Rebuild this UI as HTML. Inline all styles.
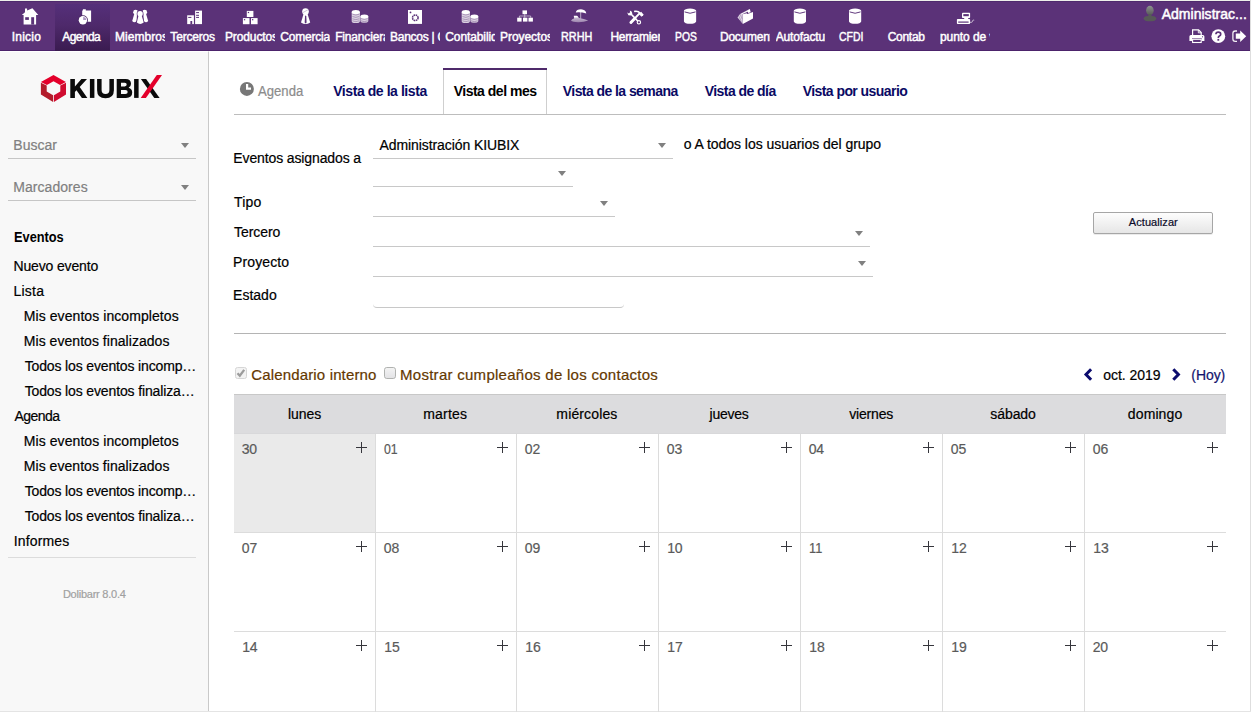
<!DOCTYPE html>
<html><head><meta charset="utf-8"><title>Agenda</title>
<style>
html,body{margin:0;padding:0;background:#fff;}
body{width:1251px;height:712px;overflow:hidden;position:relative;font-family:"Liberation Sans",sans-serif;}
.b{position:absolute;}
.t{position:absolute;white-space:nowrap;display:block;}
svg{position:absolute;left:0;top:0;}
</style></head><body>
<div class="b" style="left:0px;top:0px;width:1251px;height:712px;background:#fff;"></div>
<div class="b" style="left:0px;top:0px;width:1251px;height:1px;background:#eef0ea;"></div>
<div class="b" style="left:0px;top:1px;width:1250px;height:50px;background:#5b3278;border-top:1px solid #4f2a6d;border-bottom:1px solid #4c236b;box-sizing:border-box;"></div>
<div class="b" style="left:55px;top:4px;width:55px;height:47px;background:linear-gradient(#55307a 0%,#4e296b 45%,#3a1b50 100%);"></div>
<div class="b" style="left:0px;top:52px;width:208px;height:660px;background:#f8f8f8;"></div>
<div class="b" style="left:208px;top:52px;width:1px;height:660px;background:#c9c9c9;"></div>
<div class="b" style="left:208px;top:51px;width:1px;height:1px;background:#e4e4e4;"></div>
<div class="b" style="left:8px;top:158px;width:188px;height:1px;background:#c6c6c6;"></div>
<div class="b" style="left:8px;top:200px;width:188px;height:1px;background:#c6c6c6;"></div>
<div class="b" style="left:8px;top:557px;width:188px;height:1px;background:#dcdcdc;"></div>
<div class="b" style="left:1250px;top:0px;width:1px;height:712px;background:#dedede;"></div>
<div class="b" style="left:0px;top:711px;width:1251px;height:1px;background:#e4e4e4;"></div>
<div class="b" style="left:234px;top:114px;width:992px;height:1px;background:#bdbdbd;"></div>
<div class="b" style="left:443px;top:68px;width:104px;height:2px;background:#4f2a6b;"></div>
<div class="b" style="left:443px;top:70px;width:1px;height:44px;background:#cfcfcf;"></div>
<div class="b" style="left:546px;top:70px;width:1px;height:44px;background:#cfcfcf;"></div>
<div class="b" style="left:373px;top:158px;width:300px;height:1px;background:#c8c8c8;"></div>
<div class="b" style="left:373px;top:186px;width:200px;height:1px;background:#c8c8c8;"></div>
<div class="b" style="left:373px;top:216px;width:242px;height:1px;background:#c8c8c8;"></div>
<div class="b" style="left:373px;top:246px;width:497px;height:1px;background:#c8c8c8;"></div>
<div class="b" style="left:373px;top:276px;width:500px;height:1px;background:#c8c8c8;"></div>
<div class="b" style="left:373px;top:300px;width:251px;height:8px;border-bottom:1px solid #c8c8c8;border-radius:0 0 4px 4px;box-sizing:border-box;"></div>
<div class="b" style="left:234px;top:333px;width:992px;height:1px;background:#b4b4b4;"></div>
<div class="b" style="left:1093px;top:212px;width:120px;height:22px;box-sizing:border-box;border:1px solid #a6a6a6;border-radius:2px;background:linear-gradient(#fdfdfd,#e6e6e6);box-shadow:0 1px 0 rgba(0,0,0,.08)"></div>
<div class="b" style="left:234px;top:394px;width:992px;height:40px;background:#dcdcde;border-top:1px solid #c8c8c8;border-bottom:1px solid #d8d8da;box-sizing:border-box;"></div>
<div class="b" style="left:234px;top:434px;width:141px;height:98px;background:#eaeaea;"></div>
<div class="b" style="left:234px;top:532px;width:992px;height:1px;background:#dcdcdc;"></div>
<div class="b" style="left:234px;top:631px;width:992px;height:1px;background:#dcdcdc;"></div>
<div class="b" style="left:375px;top:434px;width:1px;height:278px;background:#dcdcdc;"></div>
<div class="b" style="left:516px;top:434px;width:1px;height:278px;background:#dcdcdc;"></div>
<div class="b" style="left:658px;top:434px;width:1px;height:278px;background:#dcdcdc;"></div>
<div class="b" style="left:800px;top:434px;width:1px;height:278px;background:#dcdcdc;"></div>
<div class="b" style="left:942px;top:434px;width:1px;height:278px;background:#dcdcdc;"></div>
<div class="b" style="left:1084px;top:434px;width:1px;height:278px;background:#dcdcdc;"></div>
<svg width="1251" height="712" viewBox="0 0 1251 712"><path fill="#fff" d="M21.8 14.9 L25 12.3 V8.6 H27.1 V10.6 L32.4 8.2 L38.3 14.9 H36.1 V24.4 H23.6 V14.9 Z"/>
<rect x="25.2" y="17.2" width="3.7" height="2.7" fill="#5b3278"/><rect x="31.2" y="17.2" width="2.9" height="7.4" fill="#5b3278"/>
<path fill="#fff" d="M82.2 10.6 H82.9 V9.3 H85.8 V10.6 H91.1 V21.8 H82.2 Z"/>
<circle cx="82.9" cy="20.2" r="5.0" fill="#4a2866"/><circle cx="82.9" cy="20.2" r="4.2" fill="#fff"/>
<path d="M83.2 19.9 V16.9 A3.2 3.2 0 0 1 86.2 19.9 Z" fill="#ab96c2"/>
<circle cx="135.6" cy="12.2" r="2.4" fill="#fff"/><path fill="#fff" d="M134.4 13.6 L132.2 21.0 Q134.39999999999998 23.599999999999998 136.6 21.0 L137.0 13.6 Z"/>
<circle cx="144.7" cy="12.2" r="2.4" fill="#fff"/><path fill="#fff" d="M143.3 13.6 L143.8 21.0 Q146.0 23.599999999999998 148.2 21.0 L145.9 13.6 Z"/>
<g stroke="#5b3278" stroke-width="1.4" fill="#5b3278"><circle cx="140.1" cy="13.7" r="2.7" /><path  d="M138.6 15.2 L136.8 22.6 Q140.25 25.2 143.7 22.6 L141.6 15.2 Z"/></g>
<circle cx="140.1" cy="13.7" r="2.7" fill="#fff"/><path fill="#fff" d="M138.6 15.2 L136.8 22.6 Q140.25 25.2 143.7 22.6 L141.6 15.2 Z"/>
<rect x="187.2" y="15.3" width="6.7" height="8.8" fill="#fff"/><rect x="190.4" y="21" width="1.8" height="3.2" fill="#5b3278"/><rect x="188.2" y="16.9" width="3.2" height="1" fill="#5b3278"/>
<rect x="195.1" y="10.6" width="6.9" height="13.5" fill="#fff"/>
<rect x="196.1" y="12.1" width="2.9" height="1" fill="#5b3278"/>
<rect x="196.1" y="14.8" width="2.9" height="1" fill="#5b3278"/>
<rect x="196.1" y="16.9" width="2.9" height="1" fill="#5b3278"/>
<rect x="246.8" y="10.9" width="6.6" height="6.1" fill="#fff"/><rect x="247.8" y="11.9" width="1.3" height="1.2" fill="#5b3278"/>
<rect x="242.9" y="18.1" width="6.6" height="6.1" fill="#fff"/><rect x="243.9" y="19.1" width="1.3" height="1.2" fill="#5b3278"/>
<rect x="251" y="18.1" width="6.6" height="6.1" fill="#fff"/><rect x="252" y="19.1" width="1.3" height="1.2" fill="#5b3278"/>
<circle cx="305.5" cy="11.6" r="3.35" fill="#fff"/><path fill="#fff" d="M303.7 13.5 L301 22.6 Q305.6 25.6 310.2 22.6 L307.4 13.5 Z"/>
<path fill="#5b3278" d="M305.5 15.3 L306.3 16.6 L306.6 22.6 L305.6 23.6 L304.7 22.6 L305 16.6 Z"/><path d="M302.8 12.6 L307.8 9.9" stroke="#5b3278" stroke-width="0.5" opacity=".6"/>
<path fill="#fff" fill-opacity=".78" d="M351.7 12 V21.2 A4.1 1.9 0 0 0 359.9 21.2 V12 Z"/><ellipse cx="355.8" cy="12" rx="4.1" ry="2.1" fill="#fff"/><path d="M352.4 14.2 Q355.8 15.9 359.2 14.2" stroke="#5b3278" stroke-opacity=".55" stroke-width="0.7" fill="none"/><path d="M352.4 16.5 Q355.8 18.2 359.2 16.5" stroke="#5b3278" stroke-opacity=".55" stroke-width="0.7" fill="none"/><path d="M352.4 18.8 Q355.8 20.5 359.2 18.8" stroke="#5b3278" stroke-opacity=".55" stroke-width="0.7" fill="none"/><path d="M352.4 20.8 Q355.8 22.5 359.2 20.8" stroke="#5b3278" stroke-opacity=".55" stroke-width="0.7" fill="none"/><path fill="#fff" fill-opacity=".78" d="M360.4 16.4 V21.3 A4 1.8 0 0 0 368.3 21.3 V16.4 Z"/><ellipse cx="364.35" cy="16.4" rx="3.95" ry="2" fill="#fff"/><path d="M361 18.599999999999998 Q364.3 20.299999999999997 367.7 18.599999999999998" stroke="#5b3278" stroke-opacity=".55" stroke-width="0.7" fill="none"/><path d="M361 20.8 Q364.3 22.5 367.7 20.8" stroke="#5b3278" stroke-opacity=".55" stroke-width="0.7" fill="none"/>
<path fill="#fff" fill-opacity=".78" d="M461.7 12 V21.2 A4.1 1.9 0 0 0 469.9 21.2 V12 Z"/><ellipse cx="465.8" cy="12" rx="4.1" ry="2.1" fill="#fff"/><path d="M462.4 14.2 Q465.8 15.9 469.2 14.2" stroke="#5b3278" stroke-opacity=".55" stroke-width="0.7" fill="none"/><path d="M462.4 16.5 Q465.8 18.2 469.2 16.5" stroke="#5b3278" stroke-opacity=".55" stroke-width="0.7" fill="none"/><path d="M462.4 18.8 Q465.8 20.5 469.2 18.8" stroke="#5b3278" stroke-opacity=".55" stroke-width="0.7" fill="none"/><path d="M462.4 20.8 Q465.8 22.5 469.2 20.8" stroke="#5b3278" stroke-opacity=".55" stroke-width="0.7" fill="none"/><path fill="#fff" fill-opacity=".78" d="M470.4 16.4 V21.3 A4 1.8 0 0 0 478.3 21.3 V16.4 Z"/><ellipse cx="474.35" cy="16.4" rx="3.95" ry="2" fill="#fff"/><path d="M471 18.599999999999998 Q474.3 20.299999999999997 477.7 18.599999999999998" stroke="#5b3278" stroke-opacity=".55" stroke-width="0.7" fill="none"/><path d="M471 20.8 Q474.3 22.5 477.7 20.8" stroke="#5b3278" stroke-opacity=".55" stroke-width="0.7" fill="none"/>
<rect x="408" y="10" width="14" height="13.9" fill="#fff"/><circle cx="415.3" cy="17.8" r="2.8" fill="none" stroke="#5b3278" stroke-width="1.5" stroke-dasharray="1.6 0.6"/><circle cx="410.5" cy="12.4" r="0.9" fill="#5b3278"/>
<rect x="522.5" y="10.4" width="4.5" height="3.8" fill="#fff"/>
<rect x="517.2" y="17.7" width="4.4" height="3.9" fill="#fff"/>
<rect x="523" y="17.7" width="4.4" height="3.9" fill="#fff"/>
<rect x="528.5" y="17.7" width="4.4" height="3.9" fill="#fff"/>
<path d="M524.75 14 V17.8 M519.4 17.8 V16 H530.7 V17.8" stroke="#fff" stroke-opacity=".55" stroke-width="1" fill="none"/>
<defs><linearGradient id="isl" x1="0" y1="0" x2="0" y2="1"><stop offset="0" stop-color="#fff" stop-opacity=".75"/><stop offset="1" stop-color="#fff" stop-opacity=".4"/></linearGradient></defs>
<path fill="#fff" d="M575.8 12.5 Q576.3 9.2 581 9.2 Q585.9 9.6 586.3 13.5 Q581 11.9 575.8 12.5 Z"/>
<path d="M580.7 12 V18.5" stroke="#fff" stroke-opacity=".65" stroke-width="0.9"/>
<path fill="url(#isl)" d="M571 20.8 Q572 19 574 18.6 L574.2 16 L577 16 L579 18 Q584 18.6 588.2 20.4 Q584 22.3 578 22.2 Q572.5 22.2 571 20.8 Z"/>
<path fill="#fff" d="M573.8 15.8 H577 L578.6 17.6 H574 Z"/>
<g fill="none" stroke="#fff" stroke-linecap="round">
<path d="M630.9 22.5 L634.2 19" stroke-width="2.9"/><path d="M631 22.4 L639.3 13.6" stroke-width="2.0"/>
<path d="M634.8 11.4 Q638.2 10.8 640.2 13.2 L642.3 15.2" stroke-width="1.6"/>
<path d="M640.0 12.9 L642.6 15.7" stroke-width="3.1" stroke-linecap="butt"/>
<path d="M630.2 13.2 L636.2 19.4" stroke-width="1.6"/>
</g>
<path fill="#fff" d="M627.2 12.6 L629 13.6 L630.2 12.4 L629.8 10.4 L631.6 11.4 L632.4 13.6 L630.8 15.6 L628.4 15.2 Z"/>
<circle cx="638.9" cy="22.3" r="1.7" fill="none" stroke="#fff" stroke-width="1.1"/><path d="M636 19.2 L637.8 21" stroke="#fff" stroke-width="1.6"/>
<path fill="#fff" d="M683.9499999999999 10.7 V21.6 A6.1 2.2 0 0 0 696.15 21.6 V10.7 Z"/><ellipse cx="690.05" cy="10.7" rx="6.1" ry="2.1" fill="#fff"/><path d="M684.55 11.9 Q690.05 14.6 695.55 11.9" fill="none" stroke="#5b3278" stroke-width="1" stroke-opacity=".95"/>
<path fill="#fff" d="M793.8 10.7 V21.6 A6.1 2.2 0 0 0 806.0 21.6 V10.7 Z"/><ellipse cx="799.9" cy="10.7" rx="6.1" ry="2.1" fill="#fff"/><path d="M794.4 11.9 Q799.9 14.6 805.4 11.9" fill="none" stroke="#5b3278" stroke-width="1" stroke-opacity=".95"/>
<path fill="#fff" d="M849.0 10.7 V21.6 A6.1 2.2 0 0 0 861.2 21.6 V10.7 Z"/><ellipse cx="855.1" cy="10.7" rx="6.1" ry="2.1" fill="#fff"/><path d="M849.6 11.9 Q855.1 14.6 860.6 11.9" fill="none" stroke="#5b3278" stroke-width="1" stroke-opacity=".95"/>
<path fill="#fff" fill-opacity=".78" d="M737.5 17.4 L739.6 14.4 L742.8 13.6 L742.8 24 Z"/>
<path d="M738.9 16.2 L741.4 21.8 M740.5 14.8 L742.3 19.2" stroke="#5b3278" stroke-opacity=".55" stroke-width="0.6" fill="none"/>
<path fill="#fff" fill-opacity=".92" d="M739.6 14.3 L747.4 10.2 L748.2 11.6 L742.8 14 Z"/>
<path fill="#fff" d="M747.2 10.2 L749.9 8.9 L750.7 12.3 L748.2 13.1 Z"/>
<path fill="#fff" d="M742.8 14.2 L746.6 13.2 L747.3 14.1 L753 12 V18.5 L742.8 24.1 Z"/>
<path d="M742.6 14.2 V24" stroke="#5b3278" stroke-opacity=".3" stroke-width="0.5"/>
<rect x="962" y="12.7" width="8.1" height="5.4" rx="0.8" fill="#fff"/><rect x="963.3" y="14.1" width="5.5" height="2.1" fill="#5b3278"/>
<rect x="964.2" y="18" width="4" height="1.4" fill="#fff"/>
<rect x="956.9" y="19" width="13.2" height="5.1" rx="0.8" fill="#fff"/><rect x="958.2" y="21.5" width="10.4" height="1.2" fill="#5b3278"/>
<path d="M970 22.3 H971.6 Q972.3 22.3 972.4 21.4 L972.6 20.6 Q972.8 20 973.6 20.1 L974.2 20.2" fill="none" stroke="#fff" stroke-width="0.7" stroke-opacity=".9"/>
<defs><linearGradient id="usr" x1="0" y1="0" x2="0" y2="1"><stop offset="0" stop-color="#8d938f"/><stop offset=".55" stop-color="#6f7370"/><stop offset="1" stop-color="#585b58"/></linearGradient></defs>
<ellipse cx="1149.9" cy="10.4" rx="3.8" ry="4.6" fill="url(#usr)"/>
<path fill="#575a57" d="M1148.5 14.2 H1151.4 V15.8 Q1155.5 16.4 1156.4 18 Q1156.6 19.6 1154.6 20.8 Q1150 21.8 1145.4 20.8 Q1143.3 19.6 1143.5 18 Q1144.4 16.4 1148.5 15.8 Z"/>
<path d="M1192.6 35.6 V29.9 H1198.6 L1201.2 32.5 V35.6" fill="none" stroke="#fff" stroke-width="1.2"/>
<path d="M1198.3 30 V32.8 H1201.2" fill="none" stroke="#fff" stroke-width="0.9"/>
<path fill="#fff" d="M1190.9 35 H1202.9 Q1204.4 35 1204.4 36.5 V41 H1201.8 V38.3 H1192 V41 H1189.4 V36.5 Q1189.4 35 1190.9 35 Z"/>
<rect x="1192.6" y="39.3" width="8.6" height="3.2" fill="none" stroke="#fff" stroke-width="1.1"/>
<rect x="1202" y="36.3" width="1" height="1" fill="#5b3278"/>
<circle cx="1218.3" cy="36.2" r="6.9" fill="#fff"/>
<path d="M1215.9 34.3 Q1216 32.2 1218.3 32.2 Q1220.7 32.2 1220.7 34.2 Q1220.7 35.4 1219.4 36.1 Q1218.3 36.7 1218.3 37.9" fill="none" stroke="#5b3278" stroke-width="1.7"/><rect x="1217.4" y="38.9" width="1.8" height="1.8" fill="#5b3278"/>
<path d="M1237 31 H1235.2 Q1232.9 31 1232.9 33.3 V39 Q1232.9 41.3 1235.2 41.3 H1237" fill="none" stroke="#fff" stroke-width="1.3" stroke-opacity=".92"/>
<path fill="#fff" d="M1235.8 33.6 H1240.2 V30.4 L1246.2 36.15 L1240.2 41.9 V38.7 H1235.8 Z"/>
<polygon points="53.5,74.9 65.9,82 60.1,85 53.5,81.3 46.9,85 40.9,82" fill="#e4002b"/>
<polygon points="40.9,82.7 46.7,85.6 46.7,91.6 53.1,95.2 53.1,102 40.9,94.6" fill="#b31c2b"/>
<polygon points="66,82.7 60.3,85.6 60.3,91.6 53.9,95.2 53.9,102 66,94.6" fill="#d00c30"/>
<path fill="#0b0b0b" d="M70.3 79 H74.9 V86.6 L81.4 79 H87 L79.7 87 L87.4 97.9 H81.9 L76.5 90.3 L74.9 92 V97.9 H70.3 Z"/>
<rect x="89.9" y="79" width="4.5" height="18.9" fill="#0b0b0b"/>
<path fill="#0b0b0b" d="M97.1 79 H101.6 V90 Q101.6 94 105.5 94 Q109.4 94 109.4 90 V79 H113.9 V90.2 Q113.9 98.3 105.5 98.3 Q97.1 98.3 97.1 90.2 Z"/>
<path fill="#0b0b0b" fill-rule="evenodd" d="M116.7 79 H125.6 Q131 79 131 83.7 Q131 86.6 128.6 87.8 Q132.2 88.9 132.2 92.5 Q132.2 97.9 126 97.9 H116.7 Z M121 82.8 V86.4 H124.8 Q126.7 86.4 126.7 84.6 Q126.7 82.8 124.8 82.8 Z M121 89.9 V94.1 H125.4 Q127.7 94.1 127.7 92 Q127.7 89.9 125.4 89.9 Z"/>
<rect x="134.1" y="79" width="4.5" height="18.9" fill="#0b0b0b"/>
<polygon points="140.9,79 146.1,79 159.6,97.9 154.3,97.9" fill="#0b0b0b"/>
<polygon points="140.7,97.9 145.9,97.9 162,75.1 156.8,75.1" fill="#e4002b"/>
<polygon points="181,143 189,143 185,148" fill="#808080"/>
<polygon points="181,185 189,185 185,190" fill="#808080"/>
<polygon points="658,143 666,143 662,148" fill="#808080"/>
<polygon points="558,171 566,171 562,176" fill="#808080"/>
<polygon points="600,201 608,201 604,206" fill="#808080"/>
<polygon points="855,231 863,231 859,236" fill="#808080"/>
<polygon points="858,261 866,261 862,266" fill="#808080"/>
<circle cx="246.9" cy="88.9" r="7" fill="#777"/><path d="M246 84 H248.2 V87.5 H251 V89.7 H246 Z" fill="#fff"/>
<rect x="235.5" y="367.5" width="11" height="11" rx="2" fill="#f3f3f3" stroke="#d6d6d6"/>
<path d="M237.5 373.3 L239.8 375.8 L244.2 369.9" fill="none" stroke="#9c9c9c" stroke-width="2.3"/>
<defs><linearGradient id="cb" x1="0" y1="0" x2="0" y2="1"><stop offset="0" stop-color="#f4f4f4"/><stop offset="1" stop-color="#e2e2e5"/></linearGradient></defs>
<rect x="384.5" y="367.5" width="11" height="11" rx="2.2" fill="url(#cb)" stroke="#b0b2b0"/>
<path d="M1091.1 369.2 L1086.0 374.5 L1091.1 379.8" fill="none" stroke="#0c0c6e" stroke-width="3"/>
<path d="M1173.3 369.2 L1178.4 374.5 L1173.3 379.8" fill="none" stroke="#0c0c6e" stroke-width="3"/>
<rect x="356" y="447" width="11" height="1" fill="#36363c"/><rect x="361" y="442" width="1" height="11" fill="#36363c"/>
<rect x="497" y="447" width="11" height="1" fill="#36363c"/><rect x="502" y="442" width="1" height="11" fill="#36363c"/>
<rect x="639" y="447" width="11" height="1" fill="#36363c"/><rect x="644" y="442" width="1" height="11" fill="#36363c"/>
<rect x="781" y="447" width="11" height="1" fill="#36363c"/><rect x="786" y="442" width="1" height="11" fill="#36363c"/>
<rect x="923" y="447" width="11" height="1" fill="#36363c"/><rect x="928" y="442" width="1" height="11" fill="#36363c"/>
<rect x="1065" y="447" width="11" height="1" fill="#36363c"/><rect x="1070" y="442" width="1" height="11" fill="#36363c"/>
<rect x="1207" y="447" width="11" height="1" fill="#36363c"/><rect x="1212" y="442" width="1" height="11" fill="#36363c"/>
<rect x="356" y="546" width="11" height="1" fill="#36363c"/><rect x="361" y="541" width="1" height="11" fill="#36363c"/>
<rect x="497" y="546" width="11" height="1" fill="#36363c"/><rect x="502" y="541" width="1" height="11" fill="#36363c"/>
<rect x="639" y="546" width="11" height="1" fill="#36363c"/><rect x="644" y="541" width="1" height="11" fill="#36363c"/>
<rect x="781" y="546" width="11" height="1" fill="#36363c"/><rect x="786" y="541" width="1" height="11" fill="#36363c"/>
<rect x="923" y="546" width="11" height="1" fill="#36363c"/><rect x="928" y="541" width="1" height="11" fill="#36363c"/>
<rect x="1065" y="546" width="11" height="1" fill="#36363c"/><rect x="1070" y="541" width="1" height="11" fill="#36363c"/>
<rect x="1207" y="546" width="11" height="1" fill="#36363c"/><rect x="1212" y="541" width="1" height="11" fill="#36363c"/>
<rect x="356" y="645" width="11" height="1" fill="#36363c"/><rect x="361" y="640" width="1" height="11" fill="#36363c"/>
<rect x="497" y="645" width="11" height="1" fill="#36363c"/><rect x="502" y="640" width="1" height="11" fill="#36363c"/>
<rect x="639" y="645" width="11" height="1" fill="#36363c"/><rect x="644" y="640" width="1" height="11" fill="#36363c"/>
<rect x="781" y="645" width="11" height="1" fill="#36363c"/><rect x="786" y="640" width="1" height="11" fill="#36363c"/>
<rect x="923" y="645" width="11" height="1" fill="#36363c"/><rect x="928" y="640" width="1" height="11" fill="#36363c"/>
<rect x="1065" y="645" width="11" height="1" fill="#36363c"/><rect x="1070" y="640" width="1" height="11" fill="#36363c"/>
<rect x="1207" y="645" width="11" height="1" fill="#36363c"/><rect x="1212" y="640" width="1" height="11" fill="#36363c"/></svg>
<span class="t" style="left:11.72px;top:30px;font-size:12px;line-height:14px;color:#fff;letter-spacing:0.222px;-webkit-text-stroke:0.45px #fff;">Inicio</span>
<span class="t" style="left:62.23px;top:30px;font-size:12px;line-height:14px;color:#fff;letter-spacing:-0.570px;-webkit-text-stroke:0.45px #fff;">Agenda</span>
<span class="t" style="left:114.97px;top:30px;font-size:12px;line-height:14px;color:#fff;letter-spacing:0.047px;-webkit-text-stroke:0.45px #fff;width:50.03px;overflow:hidden;">Miembros</span>
<span class="t" style="left:170.37px;top:30px;font-size:12px;line-height:14px;color:#fff;letter-spacing:-0.188px;-webkit-text-stroke:0.45px #fff;">Terceros</span>
<span class="t" style="left:224.97px;top:30px;font-size:12px;line-height:14px;color:#fff;letter-spacing:-0.118px;-webkit-text-stroke:0.45px #fff;width:50.03px;overflow:hidden;">Productos</span>
<span class="t" style="left:280.32px;top:30px;font-size:12px;line-height:14px;color:#fff;letter-spacing:-0.209px;-webkit-text-stroke:0.45px #fff;width:49.68px;overflow:hidden;">Comercial</span>
<span class="t" style="left:335.18px;top:30px;font-size:12px;line-height:14px;color:#fff;letter-spacing:-0.165px;-webkit-text-stroke:0.45px #fff;width:49.82px;overflow:hidden;">Financiera</span>
<span class="t" style="left:389.98px;top:30px;font-size:12px;line-height:14px;color:#fff;letter-spacing:-0.256px;-webkit-text-stroke:0.45px #fff;width:50.02px;overflow:hidden;">Bancos | Cajas</span>
<span class="t" style="left:445.32px;top:30px;font-size:12px;line-height:14px;color:#fff;letter-spacing:-0.107px;-webkit-text-stroke:0.45px #fff;width:49.68px;overflow:hidden;">Contabilidad</span>
<span class="t" style="left:499.98px;top:30px;font-size:12px;line-height:14px;color:#fff;letter-spacing:-0.039px;-webkit-text-stroke:0.45px #fff;width:50.02px;overflow:hidden;">Proyectos</span>
<span class="t" style="left:560.97px;top:30px;font-size:12px;line-height:14px;color:#fff;letter-spacing:0.000px;-webkit-text-stroke:0.45px #fff;transform:scaleX(0.9023);transform-origin:0 0;">RRHH</span>
<span class="t" style="left:610.38px;top:30px;font-size:12px;line-height:14px;color:#fff;letter-spacing:-0.284px;-webkit-text-stroke:0.45px #fff;width:49.62px;overflow:hidden;">Herramientas</span>
<span class="t" style="left:675.31px;top:30px;font-size:12px;line-height:14px;color:#fff;letter-spacing:0.000px;-webkit-text-stroke:0.45px #fff;transform:scaleX(0.8603);transform-origin:0 0;">POS</span>
<span class="t" style="left:719.98px;top:30px;font-size:12px;line-height:14px;color:#fff;letter-spacing:-0.235px;-webkit-text-stroke:0.45px #fff;width:50.02px;overflow:hidden;">Documentos</span>
<span class="t" style="left:775.63px;top:30px;font-size:12px;line-height:14px;color:#fff;letter-spacing:-0.147px;-webkit-text-stroke:0.45px #fff;width:49.37px;overflow:hidden;">Autofactura</span>
<span class="t" style="left:839.10px;top:30px;font-size:12px;line-height:14px;color:#fff;letter-spacing:0.000px;-webkit-text-stroke:0.45px #fff;transform:scaleX(0.8722);transform-origin:0 0;">CFDI</span>
<span class="t" style="left:887.73px;top:30px;font-size:12px;line-height:14px;color:#fff;letter-spacing:-0.294px;-webkit-text-stroke:0.45px #fff;">Contab</span>
<span class="t" style="left:939.88px;top:30px;font-size:12px;line-height:14px;color:#fff;letter-spacing:-0.044px;-webkit-text-stroke:0.45px #fff;width:50.12px;overflow:hidden;">punto de venta</span>
<span class="t" style="left:1161.65px;top:6px;font-size:14px;line-height:16px;color:#fff;letter-spacing:0.028px;-webkit-text-stroke:0.5px #fff;">Administrac...</span>
<span class="t" style="left:13.31px;top:137px;font-size:14px;line-height:16px;color:#808080;letter-spacing:0.018px;-webkit-text-stroke:0.2px #808080;">Buscar</span>
<span class="t" style="left:13.31px;top:179px;font-size:14px;line-height:16px;color:#808080;letter-spacing:0.046px;-webkit-text-stroke:0.2px #808080;">Marcadores</span>
<span class="t" style="left:13.50px;top:229px;font-size:14px;line-height:16px;color:#000;letter-spacing:0.000px;font-weight:bold;transform:scaleX(0.9129);transform-origin:0 0;">Eventos</span>
<span class="t" style="left:13.51px;top:258px;font-size:14px;line-height:16px;color:#000;letter-spacing:-0.148px;-webkit-text-stroke:0.2px #000;">Nuevo evento</span>
<span class="t" style="left:13.51px;top:283px;font-size:14px;line-height:16px;color:#000;letter-spacing:0.233px;-webkit-text-stroke:0.2px #000;">Lista</span>
<span class="t" style="left:23.81px;top:308px;font-size:14px;line-height:16px;color:#000;letter-spacing:0.070px;-webkit-text-stroke:0.2px #000;">Mis eventos incompletos</span>
<span class="t" style="left:23.81px;top:333px;font-size:14px;line-height:16px;color:#000;letter-spacing:0.041px;-webkit-text-stroke:0.2px #000;">Mis eventos finalizados</span>
<span class="t" style="left:24.68px;top:358px;font-size:14px;line-height:16px;color:#000;letter-spacing:-0.143px;-webkit-text-stroke:0.2px #000;">Todos los eventos incomp…</span>
<span class="t" style="left:24.68px;top:383px;font-size:14px;line-height:16px;color:#000;letter-spacing:-0.137px;-webkit-text-stroke:0.2px #000;">Todos los eventos finaliza…</span>
<span class="t" style="left:14.40px;top:408px;font-size:14px;line-height:16px;color:#000;letter-spacing:-0.531px;-webkit-text-stroke:0.2px #000;">Agenda</span>
<span class="t" style="left:23.81px;top:433px;font-size:14px;line-height:16px;color:#000;letter-spacing:0.070px;-webkit-text-stroke:0.2px #000;">Mis eventos incompletos</span>
<span class="t" style="left:23.81px;top:458px;font-size:14px;line-height:16px;color:#000;letter-spacing:0.041px;-webkit-text-stroke:0.2px #000;">Mis eventos finalizados</span>
<span class="t" style="left:24.68px;top:483px;font-size:14px;line-height:16px;color:#000;letter-spacing:-0.143px;-webkit-text-stroke:0.2px #000;">Todos los eventos incomp…</span>
<span class="t" style="left:24.68px;top:508px;font-size:14px;line-height:16px;color:#000;letter-spacing:-0.137px;-webkit-text-stroke:0.2px #000;">Todos los eventos finaliza…</span>
<span class="t" style="left:13.81px;top:533px;font-size:14px;line-height:16px;color:#000;letter-spacing:0.124px;-webkit-text-stroke:0.2px #000;">Informes</span>
<span class="t" style="left:62.90px;top:588px;font-size:11px;line-height:12px;color:#a0a0a0;letter-spacing:-0.232px;-webkit-text-stroke:0.2px #a0a0a0;">Dolibarr 8.0.4</span>
<span class="t" style="left:258.30px;top:83px;font-size:14px;line-height:16px;color:#8c8c8c;letter-spacing:0.000px;-webkit-text-stroke:0.2px #8c8c8c;transform:scaleX(0.9368);transform-origin:0 0;">Agenda</span>
<span class="t" style="left:333.20px;top:83px;font-size:14px;line-height:16px;color:#0a0a64;letter-spacing:-0.431px;font-weight:bold;">Vista de la lista</span>
<span class="t" style="left:453.70px;top:83px;font-size:14px;line-height:16px;color:#000;letter-spacing:-0.497px;font-weight:bold;">Vista del mes</span>
<span class="t" style="left:562.80px;top:83px;font-size:14px;line-height:16px;color:#0a0a64;letter-spacing:-0.566px;font-weight:bold;">Vista de la semana</span>
<span class="t" style="left:704.70px;top:83px;font-size:14px;line-height:16px;color:#0a0a64;letter-spacing:-0.549px;font-weight:bold;">Vista de día</span>
<span class="t" style="left:802.70px;top:83px;font-size:14px;line-height:16px;color:#0a0a64;letter-spacing:-0.565px;font-weight:bold;">Vista por usuario</span>
<span class="t" style="left:233.31px;top:150px;font-size:14px;line-height:16px;color:#000;letter-spacing:-0.121px;-webkit-text-stroke:0.2px #000;">Eventos asignados a</span>
<span class="t" style="left:379.50px;top:137px;font-size:14px;line-height:16px;color:#000;letter-spacing:-0.083px;-webkit-text-stroke:0.2px #000;">Administración KIUBIX</span>
<span class="t" style="left:683.66px;top:136px;font-size:14px;line-height:16px;color:#000;letter-spacing:-0.033px;-webkit-text-stroke:0.2px #000;">o A todos los usuarios del grupo</span>
<span class="t" style="left:233.98px;top:194px;font-size:14px;line-height:16px;color:#000;letter-spacing:0.224px;-webkit-text-stroke:0.2px #000;">Tipo</span>
<span class="t" style="left:233.98px;top:224px;font-size:14px;line-height:16px;color:#000;letter-spacing:-0.049px;-webkit-text-stroke:0.2px #000;">Tercero</span>
<span class="t" style="left:233.11px;top:254px;font-size:14px;line-height:16px;color:#000;letter-spacing:0.102px;-webkit-text-stroke:0.2px #000;">Proyecto</span>
<span class="t" style="left:233.11px;top:287px;font-size:14px;line-height:16px;color:#000;letter-spacing:-0.005px;-webkit-text-stroke:0.2px #000;">Estado</span>
<span class="t" style="left:1128.80px;top:216px;font-size:11px;line-height:12px;color:#0a0a28;letter-spacing:0.074px;-webkit-text-stroke:0.2px #0a0a28;">Actualizar</span>
<span class="t" style="left:251.30px;top:366px;font-size:15px;line-height:17px;color:#643800;letter-spacing:0.149px;-webkit-text-stroke:0.2px #643800;">Calendario interno</span>
<span class="t" style="left:400.03px;top:366px;font-size:15px;line-height:17px;color:#643800;letter-spacing:0.276px;-webkit-text-stroke:0.2px #643800;">Mostrar cumpleaños de los contactos</span>
<span class="t" style="left:1103.36px;top:367px;font-size:14px;line-height:16px;color:#000;letter-spacing:-0.062px;-webkit-text-stroke:0.2px #000;">oct. 2019</span>
<span class="t" style="left:1191.34px;top:367px;font-size:14px;line-height:16px;color:#14146e;letter-spacing:-0.085px;-webkit-text-stroke:0.2px #14146e;">(Hoy)</span>
<span class="t" style="left:287.93px;top:406px;font-size:14px;line-height:16px;color:#000;letter-spacing:-0.064px;-webkit-text-stroke:0.2px #000;">lunes</span>
<span class="t" style="left:423.23px;top:406px;font-size:14px;line-height:16px;color:#000;letter-spacing:0.205px;-webkit-text-stroke:0.2px #000;">martes</span>
<span class="t" style="left:556.33px;top:406px;font-size:14px;line-height:16px;color:#000;letter-spacing:0.139px;-webkit-text-stroke:0.2px #000;">miércoles</span>
<span class="t" style="left:709.54px;top:406px;font-size:14px;line-height:16px;color:#000;letter-spacing:-0.254px;-webkit-text-stroke:0.2px #000;">jueves</span>
<span class="t" style="left:849.20px;top:406px;font-size:14px;line-height:16px;color:#000;letter-spacing:-0.166px;-webkit-text-stroke:0.2px #000;">viernes</span>
<span class="t" style="left:990.28px;top:406px;font-size:14px;line-height:16px;color:#000;letter-spacing:-0.069px;-webkit-text-stroke:0.2px #000;">sábado</span>
<span class="t" style="left:1127.86px;top:406px;font-size:14px;line-height:16px;color:#000;letter-spacing:0.100px;-webkit-text-stroke:0.2px #000;">domingo</span>
<span class="t" style="left:241.86px;top:441px;font-size:14px;line-height:16px;color:#5a5a5a;letter-spacing:-0.286px;-webkit-text-stroke:0.2px #5a5a5a;">30</span>
<span class="t" style="left:383.92px;top:441px;font-size:14px;line-height:16px;color:#5a5a5a;letter-spacing:0.000px;-webkit-text-stroke:0.2px #5a5a5a;transform:scaleX(0.8787);transform-origin:0 0;">01</span>
<span class="t" style="left:524.86px;top:441px;font-size:14px;line-height:16px;color:#5a5a5a;letter-spacing:-0.067px;-webkit-text-stroke:0.2px #5a5a5a;">02</span>
<span class="t" style="left:666.86px;top:441px;font-size:14px;line-height:16px;color:#5a5a5a;letter-spacing:-0.067px;-webkit-text-stroke:0.2px #5a5a5a;">03</span>
<span class="t" style="left:808.86px;top:441px;font-size:14px;line-height:16px;color:#5a5a5a;letter-spacing:-0.286px;-webkit-text-stroke:0.2px #5a5a5a;">04</span>
<span class="t" style="left:950.86px;top:441px;font-size:14px;line-height:16px;color:#5a5a5a;letter-spacing:-0.067px;-webkit-text-stroke:0.2px #5a5a5a;">05</span>
<span class="t" style="left:1092.86px;top:441px;font-size:14px;line-height:16px;color:#5a5a5a;letter-spacing:-0.067px;-webkit-text-stroke:0.2px #5a5a5a;">06</span>
<span class="t" style="left:241.86px;top:540px;font-size:14px;line-height:16px;color:#5a5a5a;letter-spacing:-0.067px;-webkit-text-stroke:0.2px #5a5a5a;">07</span>
<span class="t" style="left:383.86px;top:540px;font-size:14px;line-height:16px;color:#5a5a5a;letter-spacing:-0.067px;-webkit-text-stroke:0.2px #5a5a5a;">08</span>
<span class="t" style="left:524.86px;top:540px;font-size:14px;line-height:16px;color:#5a5a5a;letter-spacing:-0.067px;-webkit-text-stroke:0.2px #5a5a5a;">09</span>
<span class="t" style="left:667.33px;top:540px;font-size:14px;line-height:16px;color:#5a5a5a;letter-spacing:-0.249px;-webkit-text-stroke:0.2px #5a5a5a;">10</span>
<span class="t" style="left:809.40px;top:540px;font-size:14px;line-height:16px;color:#5a5a5a;letter-spacing:0.000px;-webkit-text-stroke:0.2px #5a5a5a;transform:scaleX(0.9090);transform-origin:0 0;">11</span>
<span class="t" style="left:951.33px;top:540px;font-size:14px;line-height:16px;color:#5a5a5a;letter-spacing:-0.030px;-webkit-text-stroke:0.2px #5a5a5a;">12</span>
<span class="t" style="left:1093.32px;top:540px;font-size:14px;line-height:16px;color:#5a5a5a;letter-spacing:-0.030px;-webkit-text-stroke:0.2px #5a5a5a;">13</span>
<span class="t" style="left:242.32px;top:639px;font-size:14px;line-height:16px;color:#5a5a5a;letter-spacing:-0.249px;-webkit-text-stroke:0.2px #5a5a5a;">14</span>
<span class="t" style="left:384.33px;top:639px;font-size:14px;line-height:16px;color:#5a5a5a;letter-spacing:-0.030px;-webkit-text-stroke:0.2px #5a5a5a;">15</span>
<span class="t" style="left:525.33px;top:639px;font-size:14px;line-height:16px;color:#5a5a5a;letter-spacing:-0.030px;-webkit-text-stroke:0.2px #5a5a5a;">16</span>
<span class="t" style="left:667.33px;top:639px;font-size:14px;line-height:16px;color:#5a5a5a;letter-spacing:-0.030px;-webkit-text-stroke:0.2px #5a5a5a;">17</span>
<span class="t" style="left:809.33px;top:639px;font-size:14px;line-height:16px;color:#5a5a5a;letter-spacing:-0.030px;-webkit-text-stroke:0.2px #5a5a5a;">18</span>
<span class="t" style="left:951.33px;top:639px;font-size:14px;line-height:16px;color:#5a5a5a;letter-spacing:-0.030px;-webkit-text-stroke:0.2px #5a5a5a;">19</span>
<span class="t" style="left:1092.64px;top:639px;font-size:14px;line-height:16px;color:#5a5a5a;letter-spacing:-0.067px;-webkit-text-stroke:0.2px #5a5a5a;">20</span>
</body></html>
